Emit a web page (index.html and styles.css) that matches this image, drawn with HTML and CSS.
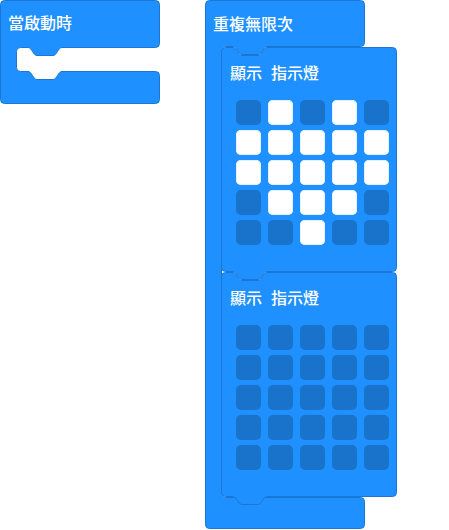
FILE: index.html
```html
<!DOCTYPE html>
<html lang="zh-Hant">

<head>
    <meta charset="UTF-8">
    <meta name="viewport" content="width=device-width, initial-scale=1.0">
    <title>Blocks</title>
    <link rel="stylesheet" href="styles.css">
</head>

<body>

    <div class="workspace">

        <!-- on start -->
        <div class="block hat">
            <svg class="shape" width="160" height="104">
                <path d="M0.5,4.5 Q0.5,0.5 4.5,0.5 H155.5 Q159.5,0.5 159.5,4.5 V43.5 Q159.5,47.5 155.5,47.5 H62 C58,47.5 57,55.5 53,55.5 H37 C33,55.5 32,47.5 28,47.5 H20.5 Q16.5,47.5 16.5,51.5 V67.5 Q16.5,71.5 20.5,71.5 H28 C32,71.5 33,79.5 37,79.5 H53 C57,79.5 58,71.5 62,71.5 H155.5 Q159.5,71.5 159.5,75.5 V99.5 Q159.5,103.5 155.5,103.5 H4.5 Q0.5,103.5 0.5,99.5 Z" />
            </svg>
            <div class="label">當啟動時</div>
        </div>

        <!-- forever -->
        <div class="block repeat">
            <svg class="shape" width="192" height="529">
                <path d="M0.5,4.5 Q0.5,0.5 4.5,0.5 H155.5 Q159.5,0.5 159.5,4.5 V42.5 Q159.5,46.5 155.5,46.5 H62 C58,46.5 57,54.5 53,54.5 H37 C33,54.5 32,46.5 28,46.5 H20.5 Q16.5,46.5 16.5,50.5 V493.5 Q16.5,497.5 20.5,497.5 H155.5 Q159.5,497.5 159.5,501.5 V524.5 Q159.5,528.5 155.5,528.5 H4.5 Q0.5,528.5 0.5,524.5 Z" />
            </svg>
            <div class="arm-top">
                <div class="label">重複無限次</div>
            </div>

            <div class="mouth">
                <div class="block show-leds">
                    <svg class="shape" width="176" height="225">
                        <path d="M0.5,4.5 Q0.5,0.5 4.5,0.5 H12 C16,0.5 17,8.5 21,8.5 H37 C41,8.5 42,0.5 46,0.5 H171.5 Q175.5,0.5 175.5,4.5 V220.5 Q175.5,224.5 171.5,224.5 H46 C42,224.5 41,232.5 37,232.5 H21 C17,232.5 16,224.5 12,224.5 H4.5 Q0.5,224.5 0.5,220.5 Z" />
                    </svg>
                    <div class="label"><span>顯示</span><span>指示燈</span></div>
                    <div class="leds">
                        <div class="led"></div><div class="led on"></div><div class="led"></div><div class="led on"></div><div class="led"></div>
                        <div class="led on"></div><div class="led on"></div><div class="led on"></div><div class="led on"></div><div class="led on"></div>
                        <div class="led on"></div><div class="led on"></div><div class="led on"></div><div class="led on"></div><div class="led on"></div>
                        <div class="led"></div><div class="led on"></div><div class="led on"></div><div class="led on"></div><div class="led"></div>
                        <div class="led"></div><div class="led"></div><div class="led on"></div><div class="led"></div><div class="led"></div>
                    </div>
                </div>

                <div class="block show-leds">
                    <svg class="shape" width="176" height="225">
                        <path d="M0.5,4.5 Q0.5,0.5 4.5,0.5 H12 C16,0.5 17,8.5 21,8.5 H37 C41,8.5 42,0.5 46,0.5 H171.5 Q175.5,0.5 175.5,4.5 V220.5 Q175.5,224.5 171.5,224.5 H46 C42,224.5 41,232.5 37,232.5 H21 C17,232.5 16,224.5 12,224.5 H4.5 Q0.5,224.5 0.5,220.5 Z" />
                    </svg>
                    <div class="label"><span>顯示</span><span>指示燈</span></div>
                    <div class="leds">
                        <div class="led"></div><div class="led"></div><div class="led"></div><div class="led"></div><div class="led"></div>
                        <div class="led"></div><div class="led"></div><div class="led"></div><div class="led"></div><div class="led"></div>
                        <div class="led"></div><div class="led"></div><div class="led"></div><div class="led"></div><div class="led"></div>
                        <div class="led"></div><div class="led"></div><div class="led"></div><div class="led"></div><div class="led"></div>
                        <div class="led"></div><div class="led"></div><div class="led"></div><div class="led"></div><div class="led"></div>
                    </div>
                </div>
            </div>

            <div class="arm-bottom"></div>
        </div>

    </div>

</body>

</html>
```

FILE: styles.css
```css
/* Workspace */
body {
    margin: 0;
    background-color: #fff;
    font-family: 'Noto Sans CJK TC', 'Noto Sans', sans-serif;
}

.workspace {
    display: flex;
    align-items: flex-start;
    gap: 45px;
}

/* Block shapes */
.block {
    position: relative;
    z-index: 0;
}

.shape {
    position: absolute;
    top: 0;
    left: 0;
    z-index: -1;
    overflow: visible;
}

.shape path {
    fill: #1e90ff;
    stroke: #1a76d4;
    stroke-width: 1;
    stroke-linejoin: round;
}

.label {
    display: flex;
    gap: 9px;
    color: #fff;
    font-size: 16px;
    font-weight: 500;
    line-height: 20px;
    white-space: nowrap;
}

/* On start */
.hat {
    width: 160px;
    height: 104px;
}

.hat .label {
    padding: 12px 0 0 8px;
}

/* Forever */
.repeat {
    width: 192px;
}

.arm-top {
    width: 160px;
    height: 47px;
}

.arm-top .label {
    padding: 13px 0 0 8px;
}

.mouth {
    padding-left: 16px;
}

.arm-bottom {
    width: 160px;
    height: 32px;
}

/* Show leds */
.show-leds {
    width: 176px;
    height: 225px;
}

.show-leds .label {
    padding: 15px 0 0 9px;
}

.leds {
    display: grid;
    grid-template-columns: repeat(5, 25px);
    grid-auto-rows: 25px;
    column-gap: 7px;
    row-gap: 5px;
    margin: 18px 0 0 15px;
}

.led {
    border-radius: 5px;
    background-color: #1a73ca;
}

.led.on {
    background-color: #fff;
    box-shadow: inset 0 0 0 1px #e3f0ff;
}
```
